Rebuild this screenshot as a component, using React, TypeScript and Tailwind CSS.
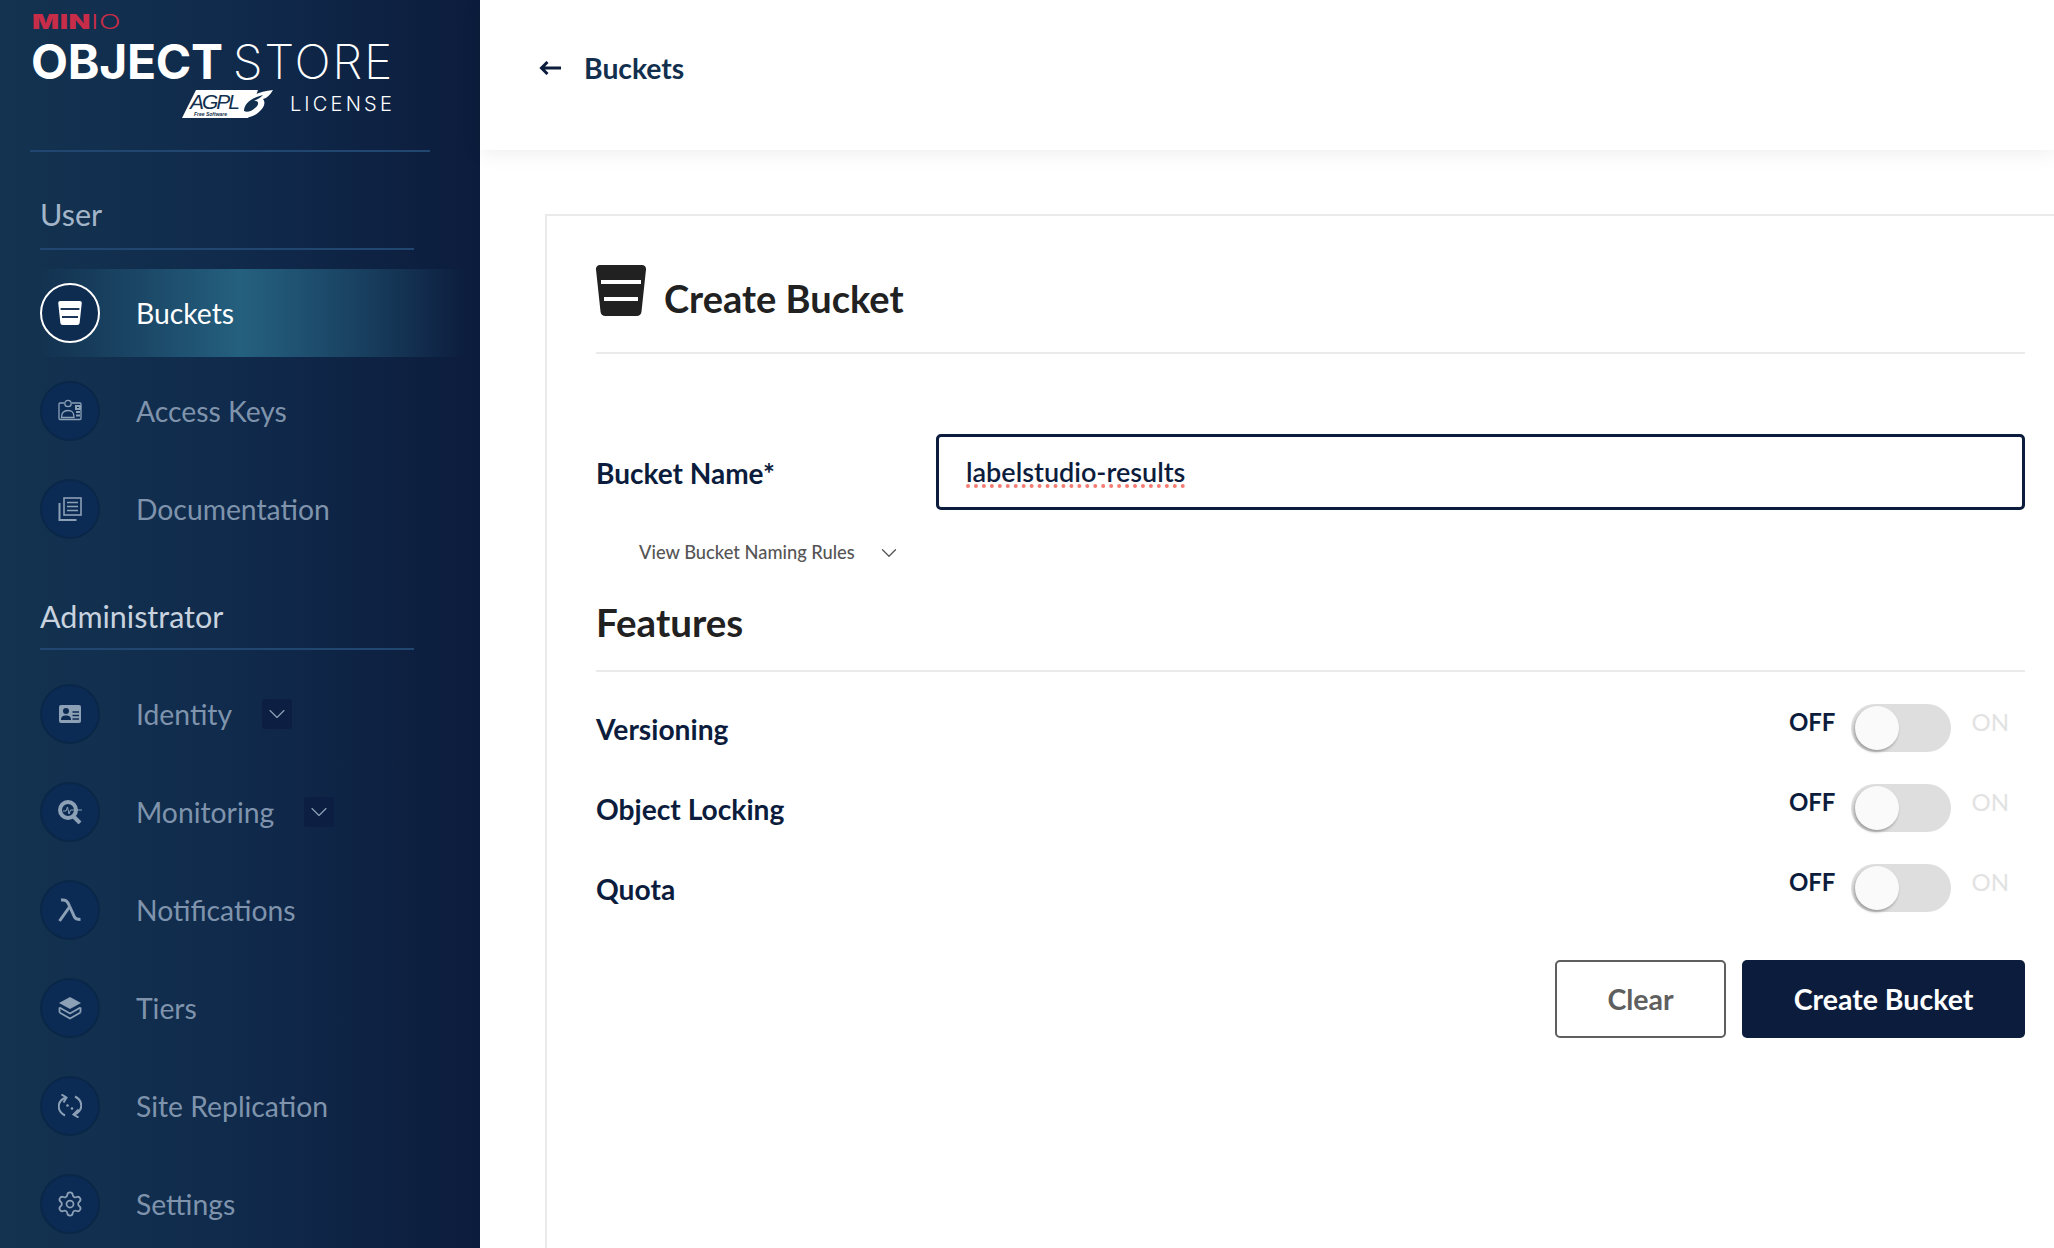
import { ReactNode } from 'react';
import { ChevronDown, Settings } from 'lucide-react';

function BucketIcon({ className }: { className?: string }) {
  return (
    <svg viewBox="0 0 50 51" className={className} fill="currentColor">
      <path d="M4 0h42a4 4 0 0 1 4 4.4L45.5 46.5A5 5 0 0 1 40.5 51h-31a5 5 0 0 1-5-4.5L0 4.4A4 4 0 0 1 4 0Z" />
      <rect x="5" y="15" width="40" height="4" fill="var(--cut, #fff)" />
      <rect x="8" y="32" width="34" height="4" fill="var(--cut, #fff)" />
    </svg>
  );
}

function AccessKeysIcon() {
  return (
    <svg viewBox="0 0 24 24" className="w-6 h-6" fill="none" stroke="currentColor" strokeWidth="1.3">
      <path d="M6 4H2a1 1 0 0 0-1 1v14.500a1 1 0 0 0 1 1h20a1 1 0 0 0 1-1V5a1 1 0 0 0-1-1h-8" />
      <circle cx="10" cy="4.500" r="3.200" />
      <path d="M3.500 18.500c0-6 3-7 6.500-7s6 1 6 7Z" />
      <path d="M18 7h4v3h-4ZM18 13h4M18 16.500h4" strokeWidth="2" />
    </svg>
  );
}

function DocsIcon() {
  return (
    <svg viewBox="0 0 24 24" className="w-6 h-6" fill="none" stroke="currentColor" strokeWidth="1.6">
      <rect x="6" y="1" width="17" height="17" />
      <path d="M9 5.500h11M9 9.500h11M9 13.500h11" />
      <path d="M1.500 6v17h17" strokeWidth="2" />
    </svg>
  );
}

function IdentityIcon() {
  return (
    <svg viewBox="0 0 24 24" className="w-6 h-6">
      <rect x="1" y="3" width="22" height="18" rx="2" fill="currentColor" />
      <circle cx="8" cy="9" r="3" fill="#0c2a52" />
      <path d="M3 18c0-3.500 2-4.500 5-4.500s5 1 5 4.500Z" fill="#0c2a52" />
      <path d="M14.500 10h6.500M14.500 13.500h6.500M14.500 17h6.500" stroke="#0c2a52" strokeWidth="1.500" />
    </svg>
  );
}

function MonitoringIcon() {
  return (
    <svg viewBox="0 0 24 24" className="w-6 h-6" fill="none">
      <circle cx="10" cy="10" r="8" stroke="currentColor" strokeWidth="4" />
      <path d="M15.500 16.500 L22 23" stroke="currentColor" strokeWidth="4" />
      <path d="M5 11h3l1.500-4 1.500 7 1.500-4H24" stroke="currentColor" strokeWidth="1" />
    </svg>
  );
}

function LambdaIcon() {
  return (
    <svg viewBox="0 0 24 24" className="w-6 h-6" fill="none" stroke="currentColor" strokeWidth="3">
      <path d="M3 2c5-.5 6.500 1 8.500 6l5 11c1 2 3 2.500 6 2.500" />
      <path d="M11.800 8.500 1.500 23" />
    </svg>
  );
}

function TiersIcon() {
  return (
    <svg viewBox="0 0 24 24" className="w-6 h-6" fill="none" stroke="currentColor" strokeWidth="1.800">
      <path d="M12 1 23 7 12 13 1 7Z" fill="currentColor" strokeWidth="0" />
      <path d="M1.500 11.500 12 17.500l10.500-6" />
      <path d="M1.500 16.500 12 22.500l10.500-6" />
      <path d="M1.500 11.500v5M22.500 11.500v5" />
    </svg>
  );
}

function ReplicationIcon() {
  return (
    <svg viewBox="0 0 24 24" className="w-6 h-6" fill="none" stroke="currentColor" strokeWidth="2">
      <path d="M8 3.500C-1.500 7-1.500 17 7 21.500" />
      <path d="M16 20.500C25.500 17 25.500 7 17 2.500" />
      <path d="M3.500 0.500 8.500 3.500 5.500 8.500" />
      <path d="M20.500 15.500 15.500 20.500 20.500 23.500" />
      <circle cx="9.500" cy="11.500" r="1.300" fill="currentColor" stroke="none" />
      <circle cx="14" cy="14.500" r="1.300" fill="currentColor" stroke="none" />
    </svg>
  );
}

function Rule({ className }: { className: string }) {
  return <div className={`h-[2px] bg-[#21466f] ${className}`} />;
}

interface NavItemProps {
  icon: ReactNode;
  label: string;
  active?: boolean;
  expandable?: boolean;
}

function NavItem({ icon, label, active, expandable }: NavItemProps) {
  return (
    <div
      className={`h-[88px] pl-10 flex items-center ${
        active
          ? 'bg-[linear-gradient(90deg,rgba(37,96,127,0)_8%,#25607f_50%,rgba(37,96,127,0)_97%)] text-white'
          : 'text-[#7f94ac]'
      }`}
    >
      <div
        className={`w-[60px] h-[60px] rounded-full flex items-center justify-center shrink-0 border-2 ${
          active ? 'border-white bg-[#0e2b50] text-white' : 'border-[#0a2748] bg-[#0b2b55] text-[#8ca0b6]'
        }`}
      >
        {icon}
      </div>
      <span className="ml-[36px] text-[28.300px] leading-none">{label}</span>
      {expandable && (
        <div className="ml-[30px] w-[30px] h-[30px] rounded-[3px] bg-[#0c1f42] flex items-center justify-center text-[#8ca0b6]">
          <ChevronDown className="w-[28px] h-[28px]" strokeWidth={1} />
        </div>
      )}
    </div>
  );
}

function Logo() {
  return (
    <div className="pl-8 pr-[88px] h-[152px] text-white relative font-['Inter',sans-serif]">
      <div className="pt-[9px] h-[36px] text-[#c72c48] text-[20px] leading-[26px]">
        <span className="inline-block origin-left scale-x-[1.42] tracking-[0.02em]">
          <span className="font-black">MIN</span>
          <span className="font-light">IO</span>
        </span>
      </div>
      <div className="flex justify-between items-center h-[50px] text-[48px] leading-none -ml-[1px] pt-[2px]">
        <span className="font-bold -tracking-[0.006em]">OBJECT</span>
        <span className="font-extralight tracking-[0.035em] -mr-[2px]">STORE</span>
      </div>
      <div className="flex justify-end items-center gap-[16px] mt-[2px] h-[32px]">
        <svg viewBox="0 0 92 30" className="w-[92px] h-[30px]">
          <path d="M14 1h62L66 29H0Z" fill="#fff" />
          <text x="8" y="20" fontSize="21" fontStyle="italic" fontFamily="Liberation Sans" fill="#12304e" textLength="50">
            AGPL
          </text>
          <text x="12" y="27" fontSize="5" fontStyle="italic" fontWeight="700" fontFamily="Liberation Sans" fill="#12304e">
            Free Software
          </text>
          <path d="M57 27c-2-13 13-24 34-26-3 5-6 8-10 9 3 4 1 9-4 13-7 6-15 7-20 4Z" fill="#fff" />
          <path d="M62 22c0-7 7-13 19-16-3 3-6 5-10 6 7-1 6 4 2 7-3 3-8 5-11 3Z" fill="#12304e" />
        </svg>
        <span className="text-[20px] font-light tracking-[0.16em] leading-none -mr-[3px]">LICENSE</span>
      </div>
      <div className="absolute left-[30px] right-[50px] bottom-0 h-[2px] bg-[#21466f]" />
    </div>
  );
}

function Sidebar() {
  return (
    <aside className="w-[480px] shrink-0 h-full overflow-hidden bg-[linear-gradient(90deg,#133350_0%,#102a4c_50%,#0c1c3c_100%)]">
      <Logo />
      <div className="pl-10 pr-[66px] pt-[44px]">
        <h3 className="text-[30.500px] leading-[36px] text-[#a3b5c9]">User</h3>
        <Rule className="mt-[16px]" />
      </div>
      <div className="mt-[19px]">
        <NavItem icon={<BucketIcon className="w-6 h-6 [--cut:#0e2b50]" />} label="Buckets" active />
      </div>
      <div className="flex flex-col gap-[10px] mt-[10px]">
        <NavItem icon={<AccessKeysIcon />} label="Access Keys" />
        <NavItem icon={<DocsIcon />} label="Documentation" />
      </div>
      <div className="pl-10 pr-[66px] pt-[45px]">
        <h3 className="text-[30.500px] leading-[36px] text-[#c8d3df]">Administrator</h3>
        <Rule className="mt-[14px]" />
      </div>
      <div className="flex flex-col gap-[10px] mt-[20px]">
        <NavItem icon={<IdentityIcon />} label="Identity" expandable />
        <NavItem icon={<MonitoringIcon />} label="Monitoring" expandable />
        <NavItem icon={<LambdaIcon />} label="Notifications" />
        <NavItem icon={<TiersIcon />} label="Tiers" />
        <NavItem icon={<ReplicationIcon />} label="Site Replication" />
        <NavItem icon={<Settings className="w-[28px] h-[28px]" strokeWidth={1.5} />} label="Settings" />
      </div>
    </aside>
  );
}

function FeatureRow({ label }: { label: string }) {
  return (
    <div className="h-[80px] flex items-center justify-between">
      <span className="text-[28.200px] font-bold text-[#0c1c3c] pt-[2px]">{label}</span>
      <div className="flex items-start pr-[16px] h-[48px]">
        <span className="text-[24px] leading-[36px] font-bold text-[#0c1c3c]">OFF</span>
        <div className="relative ml-4 w-[100px] h-[48px] rounded-full bg-[#dedede]">
          <div className="absolute left-[4px] top-[2px] w-[44px] h-[44px] rounded-full bg-[#fafafa] shadow-[-1px_2px_3px_rgba(0,0,0,0.3)]" />
        </div>
        <span className="ml-[20px] text-[24px] leading-[36px] text-[#e2e2e2]">ON</span>
      </div>
    </div>
  );
}

function CreateBucketForm() {
  return (
    <div className="ml-[65px] mt-[64px] flex-1 border-t-2 border-l-2 border-[#eaeaea] pl-[49px] pr-[29px] pt-[49px]">
      <div className="flex items-start h-[89px] border-b-2 border-[#eaeaea] text-[#212121]">
        <BucketIcon className="w-[50px] h-[51px]" />
        <h1 className="ml-[18px] mt-[9px] text-[38px] leading-[48px] font-bold">Create Bucket</h1>
      </div>

      <div className="mt-[80px] flex items-center h-[76px]">
        <label className="w-[340px] shrink-0 text-[28px] font-bold text-[#0c1c3c] pt-[2px]">Bucket Name*</label>
        <div className="flex-1 h-[76px] border-[3px] border-[#0c1c3c] rounded-[5px] pl-[27px] flex items-center text-[27px] font-semibold text-[#0c1c3c]">
          <span className="underline decoration-dotted decoration-[#f47c72] decoration-[4px] underline-offset-[3px]">
            labelstudio-results
          </span>
        </div>
      </div>

      <div className="mt-[27px] pl-[43px] flex items-center h-[32px] text-[18.300px] font-medium text-[#555]">
        <span>View Bucket Naming Rules</span>
        <ChevronDown className="ml-[21px] w-[26px] h-[26px]" strokeWidth={1.2} />
      </div>

      <h2 className="mt-[29px] text-[38.500px] leading-[48px] font-bold text-[#212121]">Features</h2>
      <div className="mt-[24px] h-[2px] bg-[#eaeaea]" />

      <div className="mt-[16px]">
        <FeatureRow label="Versioning" />
        <FeatureRow label="Object Locking" />
        <FeatureRow label="Quota" />
      </div>

      <div className="mt-[32px] flex justify-end gap-4">
        <button className="w-[171px] h-[78px] border-2 border-[#5f5f5f] rounded-[5px] text-[28.500px] font-bold text-[#5f5f5f]">
          Clear
        </button>
        <button className="w-[283px] h-[78px] rounded-[5px] bg-[#0c1c3c] text-[28.500px] font-bold text-white">
          Create Bucket
        </button>
      </div>
    </div>
  );
}

export default function App() {
  return (
    <div className="h-[1248px] flex overflow-hidden bg-white font-['Lato',sans-serif]">
      <Sidebar />
      <main className="flex-1 flex flex-col min-w-0">
        <header className="h-[150px] shrink-0 pl-[59px] pb-[14px] flex items-center bg-white shadow-[0_3px_20px_rgba(0,0,0,0.07)] text-[#0c1c3c]">
          <svg viewBox="0 0 22 14" className="w-[22px] h-[14px]" fill="none" stroke="currentColor" strokeWidth="3">
            <path d="M22 7H3M8.500 1 2.500 7l6 6" />
          </svg>
          <span className="ml-[23px] text-[28.300px] font-bold text-[#12304e]">Buckets</span>
        </header>
        <CreateBucketForm />
      </main>
    </div>
  );
}
